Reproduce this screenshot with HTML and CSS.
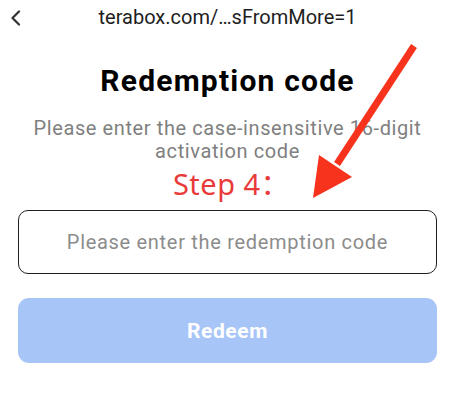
FILE: index.html
```html
<!DOCTYPE html>
<html lang="en">
<head>
    <meta charset="UTF-8">
    <meta name="viewport" content="width=device-width, initial-scale=1.0">
    <title>Redemption code</title>
    <link rel="stylesheet" href="styles.css">
</head>
<body>
    <!-- Top bar with back button and page address -->
    <div class="topbar">
        <span class="back">
            <svg width="12" height="16" viewBox="0 0 12 16">
                <polyline points="9,1.5 2.5,8 9,14.5" fill="none" stroke="#333" stroke-width="2.2" stroke-linecap="round" stroke-linejoin="round"/>
            </svg>
        </span>
        <span class="address">terabox.com/…sFromMore=1</span>
    </div>

    <div class="page">
        <h1 class="title">Redemption code</h1>
        <p class="hint">Please enter the case-insensitive 16-digit activation code</p>
        <div class="step">Step 4：</div>

        <div class="code-box">
            <input type="text" class="code-input" placeholder="Please enter the redemption code">
        </div>

        <button class="redeem">Redeem</button>
    </div>

    <!-- Red annotation arrow pointing to the input -->
    <svg class="pointer" width="455" height="417" viewBox="0 0 455 417">
        <line x1="414" y1="46" x2="337" y2="164" stroke="#f7331d" stroke-width="7"/>
        <polygon points="313,198 319,155 352,177" fill="#f7331d"/>
    </svg>
</body>
</html>
```

FILE: styles.css
```css
body {
    margin: 0;
    padding: 0;
    background-color: #ffffff;
    font-family: Roboto, "Noto Sans", Arial, sans-serif;
    width: 455px;
    height: 417px;
    overflow: hidden;
    position: relative;
}
.topbar {
    height: 33px;
    display: flex;
    align-items: center;
    justify-content: center;
    position: relative;
}
.back {
    position: absolute;
    left: 10px;
    top: 10px;
    display: flex;
}
.address {
    font-size: 20px;
    color: #1e1e1e;
}
.page {
    padding: 0 18px;
    text-align: center;
}
.title {
    margin: 30px 0 0;
    font-size: 30px;
    font-weight: bold;
    letter-spacing: 1.2px;
    color: #000;
    line-height: 36px;
}
.hint {
    margin: 18px 0 0;
    font-size: 20px;
    letter-spacing: 0.6px;
    line-height: 23px;
    color: #808080;
}
.step {
    font-family: "Noto Sans", "Noto Sans CJK SC", sans-serif;
    font-size: 29px;
    letter-spacing: 0.5px;
    line-height: 36px;
    color: #e93a3a;
    margin-top: 3px;
    padding-left: 8px;
}
.code-box {
    margin-top: 8px;
    height: 64px;
    border: 1.5px solid #1f1f1f;
    border-radius: 10px;
    box-sizing: border-box;
    display: flex;
}
.code-input {
    flex: 1;
    border: none;
    outline: none;
    background: transparent;
    text-align: center;
    font-family: Roboto, sans-serif;
    font-size: 20px;
    letter-spacing: 0.7px;
    color: #333;
}
.code-input::placeholder {
    color: #8c8c8c;
}
.redeem {
    display: block;
    width: 100%;
    height: 65px;
    margin-top: 24px;
    border: none;
    border-radius: 11px;
    background-color: #a8c5f8;
    color: #fff;
    font-family: Roboto, sans-serif;
    font-size: 21px;
    letter-spacing: 0.6px;
    font-weight: bold;
}
.pointer {
    position: absolute;
    left: 0;
    top: 0;
    pointer-events: none;
}
```
